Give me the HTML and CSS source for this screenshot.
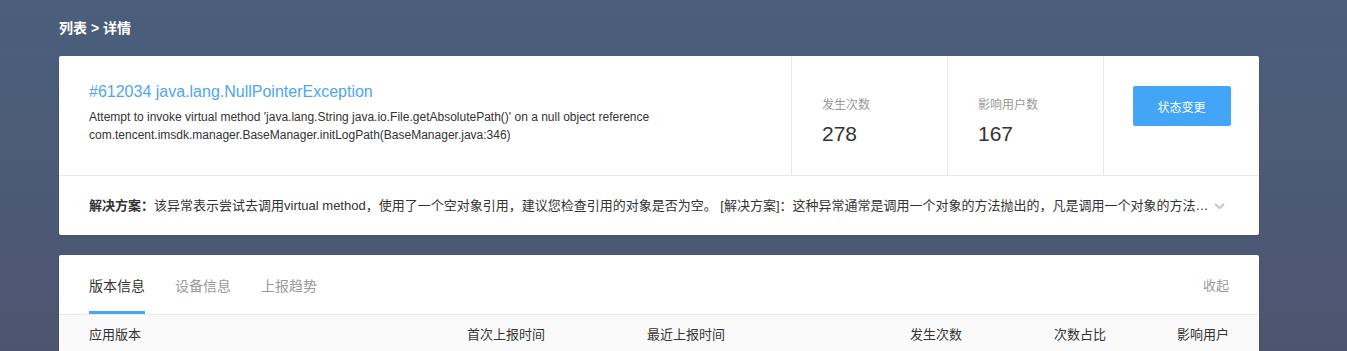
FILE: index.html
```html
<!DOCTYPE html>
<html lang="zh-CN">
<head>
<meta charset="utf-8">
<title>详情</title>
<link rel="stylesheet" href="styles.css">
</head>
<body>
<div class="page">
  <div class="crumb">列表 &gt; 详情</div>

  <section class="card summary">
    <div class="summary-top">
      <div class="issue">
        <div class="issue-title">#612034 java.lang.NullPointerException</div>
        <div class="issue-desc">Attempt to invoke virtual method 'java.lang.String java.io.File.getAbsolutePath()' on a null object reference</div>
        <div class="issue-desc">com.tencent.imsdk.manager.BaseManager.initLogPath(BaseManager.java:346)</div>
      </div>
      <div class="stat">
        <div class="stat-label">发生次数</div>
        <div class="stat-value">278</div>
      </div>
      <div class="stat">
        <div class="stat-label">影响用户数</div>
        <div class="stat-value">167</div>
      </div>
      <div class="stat action">
        <button class="btn-primary" type="button">状态变更</button>
      </div>
    </div>
    <div class="solution">
      <div class="solution-text"><b>解决方案：</b>该异常表示尝试去调用virtual method，使用了一个空对象引用，建议您检查引用的对象是否为空。 [解决方案]：这种异常通常是调用一个对象的方法抛出的，凡是调用一个对象的方法时，都应该先判断该对象是否为空，避免出现空指针异常。</div>
      <svg class="chevron" width="11" height="6" viewBox="0 0 11 6"><path d="M1 1 L5.5 5 L10 1" fill="none" stroke="#c4c4c4" stroke-width="2"/></svg>
    </div>
  </section>

  <section class="card detail">
    <div class="tabs">
      <div class="tab active">版本信息</div>
      <div class="tab">设备信息</div>
      <div class="tab">上报趋势</div>
      <div class="tabs-spacer"></div>
      <div class="collapse">收起</div>
    </div>
    <div class="table-head">
      <div>应用版本</div>
      <div>首次上报时间</div>
      <div>最近上报时间</div>
      <div>发生次数</div>
      <div>次数占比</div>
      <div>影响用户</div>
    </div>
  </section>
</div>
</body>
</html>
```

FILE: styles.css
```css
html, body {
  margin: 0;
  padding: 0;
}

body {
  min-height: 351px;
  background: linear-gradient(to bottom, #4a5f7c 0%, #4c5a77 50%, #4e5470 100%);
  font-family: "Liberation Sans", "Noto Sans CJK SC", sans-serif;
  color: #333;
}

.page {
  width: 1200px;
  padding: 18px 0 0 59px;
}

.crumb {
  color: #fff;
  font-size: 14px;
  font-weight: bold;
  line-height: 20px;
  height: 20px;
  margin-bottom: 18px;
}

.card {
  background: #fff;
  border-radius: 2px;
  box-shadow: 0 1px 3px rgba(0, 0, 0, 0.08);
}

.summary {
  margin-bottom: 20px;
}

.summary-top {
  display: flex;
  height: 119px;
  border-bottom: 1px solid #e8e8e8;
}

.issue {
  flex: 1;
  padding: 25px 30px 0 30px;
  min-width: 0;
}

.issue-title {
  color: #4ea6f2;
  font-size: 16px;
  line-height: 22px;
  margin-bottom: 5px;
}

.issue-desc {
  font-size: 12px;
  line-height: 18px;
  color: #333;
  white-space: nowrap;
}

.stat {
  border-left: 1px solid #e8e8e8;
  padding: 40px 0 0 30px;
  box-sizing: border-box;
  width: 156px;
}

.stat-label {
  font-size: 12px;
  line-height: 18px;
  color: #999;
}

.stat-value {
  font-size: 21px;
  line-height: 26px;
  color: #333;
  margin-top: 7px;
}

.stat.action {
  padding: 30px 0 0 0;
  display: flex;
  justify-content: center;
  align-items: flex-start;
}

.btn-primary {
  width: 98px;
  height: 40px;
  border: none;
  border-radius: 2px;
  background: #42a5f5;
  color: #fff;
  font-family: inherit;
  font-size: 12px;
  cursor: pointer;
  padding: 0;
}

.solution {
  display: flex;
  align-items: center;
  height: 59px;
  padding: 0 34px 0 30px;
}

.solution-text {
  flex: 1;
  min-width: 0;
  font-size: 13px;
  line-height: 20px;
  white-space: nowrap;
  overflow: hidden;
  text-overflow: ellipsis;
  color: #333;
  margin-right: 4px;
}

.solution-text b {
  font-weight: bold;
}

.chevron {
  flex: none;
  display: block;
}

.tabs {
  display: flex;
  align-items: stretch;
  height: 59px;
  padding: 0 30px;
  border-bottom: 1px solid #e8e8e8;
}

.tab {
  position: relative;
  display: flex;
  align-items: center;
  font-size: 14px;
  color: #999;
  margin-right: 30px;
}

.tab.active {
  color: #333;
}

.tab.active::after {
  content: "";
  position: absolute;
  left: 0;
  right: 0;
  bottom: 0;
  height: 3px;
  background: #4aa8f0;
}

.tabs-spacer {
  flex: 1;
}

.collapse {
  display: flex;
  align-items: center;
  font-size: 13px;
  color: #999;
}

.table-head {
  display: grid;
  grid-template-columns: 378px 180px 263px 144px 1fr auto;
  height: 40px;
  line-height: 40px;
  padding: 0 30px;
  background: #fafafa;
  font-size: 13px;
  color: #333;
}
```
